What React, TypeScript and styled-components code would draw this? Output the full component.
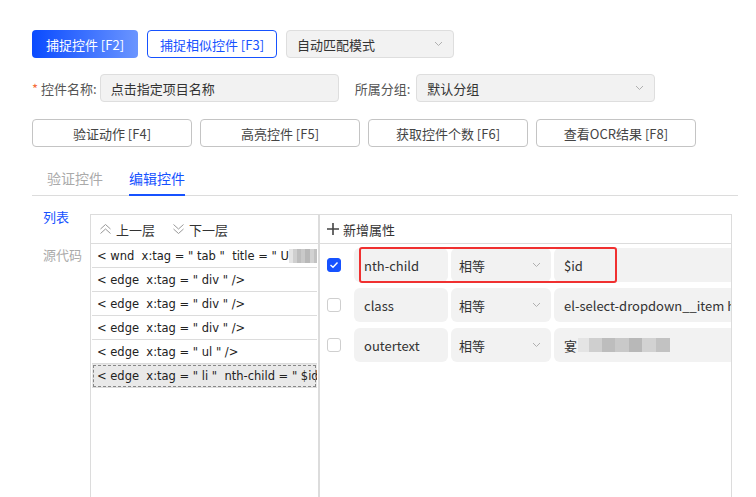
import React from "react";
import styled, { createGlobalStyle } from "styled-components";

const GlobalStyle = createGlobalStyle`
  html, body {
    margin: 0;
    padding: 0;
    background: #fff;
    overflow: hidden;
  }
  body {
    font-family: "Noto Sans CJK SC", "Noto Sans", sans-serif;
    color: #333;
  }
`;

const BLUE = "#1652ff";

const Page = styled.div`
  padding: 30px 0 0 32px;
  width: 724px;
`;

const Toolbar = styled.div`
  display: flex;
  gap: 9px;
  align-items: center;
`;

const PrimaryButton = styled.button`
  height: 28px;
  width: 106px;
  border: none;
  border-radius: 4px;
  background: linear-gradient(90deg, #0a4bff 0%, #6b95ff 100%);
  color: #fff;
  font-family: inherit;
  font-size: 13px;
  padding: 0;
`;

const OutlineButton = styled.button<{ $w?: number }>`
  height: 28px;
  width: ${(p) => p.$w ?? 130}px;
  border: 1px solid ${BLUE};
  border-radius: 4px;
  background: #fff;
  color: ${BLUE};
  font-family: inherit;
  font-size: 13px;
  padding: 0;
`;

const Select = styled.div<{ $w: number }>`
  box-sizing: border-box;
  height: 28px;
  width: ${(p) => p.$w}px;
  display: flex;
  align-items: center;
  justify-content: space-between;
  padding: 0 10px 0 10px;
  background: #f2f2f2;
  border: 1px solid #dedede;
  border-radius: 4px;
  font-size: 13px;
  color: #333;
`;

const FormRow = styled.div`
  display: flex;
  align-items: center;
  margin-top: 16px;
`;

const Label = styled.span<{ $ml?: number; $mr?: number }>`
  font-size: 13px;
  color: #555;
  margin-left: ${(p) => p.$ml ?? 0}px;
  margin-right: ${(p) => p.$mr ?? 9}px;
  white-space: nowrap;
`;

const Star = styled.span`
  color: #f56c3c;
  margin-right: 3px;
`;

const Input = styled.div`
  box-sizing: border-box;
  height: 28px;
  width: 239px;
  display: flex;
  align-items: center;
  padding-left: 10px;
  background: #f2f2f2;
  border: 1px solid #dedede;
  border-radius: 4px;
  font-size: 13px;
  color: #333;
`;

const ActionRow = styled.div`
  display: grid;
  grid-template-columns: repeat(4, 160px);
  gap: 8px;
  margin-top: 17px;
`;

const GhostButton = styled.button`
  height: 28px;
  border: 1px solid #c4c4c4;
  border-radius: 4px;
  background: #fff;
  color: #444;
  font-family: inherit;
  font-size: 13px;
  padding: 0;
`;

const TabBar = styled.div`
  display: flex;
  gap: 26px;
  padding-left: 15px;
  width: 691px;
  border-bottom: 1px solid #dcdcdc;
`;

const Tab = styled.div<{ $active?: boolean }>`
  padding: 22px 0 7px;
  font-size: 14px;
  line-height: 18px;
  color: ${(p) => (p.$active ? BLUE : "#aaa")};
  border-bottom: 2px solid ${(p) => (p.$active ? BLUE : "transparent")};
  margin-bottom: -1px;
`;

const Body = styled.div`
  display: flex;
  margin-top: 10px;
`;

const SideNav = styled.div`
  width: 58px;
  display: flex;
  flex-direction: column;
  gap: 16px;
  padding-left: 11px;
  box-sizing: border-box;
`;

const SideItem = styled.div<{ $active?: boolean }>`
  font-size: 13px;
  line-height: 22px;
  color: ${(p) => (p.$active ? BLUE : "#aaa")};
`;

const Panel = styled.div<{ $w: number }>`
  box-sizing: border-box;
  margin-top: 8px;
  width: ${(p) => p.$w}px;
  height: 300px;
  border: 1px solid #dcdcdc;
  overflow: hidden;
  flex-shrink: 0;
`;

const PanelHeader = styled.div`
  height: 28px;
  display: flex;
  align-items: center;
  border-bottom: 1px solid #dcdcdc;
  font-size: 13px;
  color: #333;
`;

const LayerButton = styled.span<{ $ml: number }>`
  display: inline-flex;
  align-items: center;
  gap: 4px;
  margin-left: ${(p) => p.$ml}px;
`;

const NodeList = styled.div`
  padding: 0 1px;
`;

const NodeRow = styled.div<{ $selected?: boolean }>`
  box-sizing: border-box;
  height: 24px;
  display: flex;
  align-items: center;
  padding-left: 5px;
  white-space: pre;
  overflow: hidden;
  font-family: "DejaVu Sans", Verdana, sans-serif;
  font-size: 11.5px;
  color: #222;
  border-bottom: 1px solid #dcdcdc;
  background: ${(p) => (p.$selected ? "#e9e9e9" : "#fff")};
  outline: ${(p) => (p.$selected ? "1px dashed #888" : "none")};
  outline-offset: -2px;
`;

const Mosaic = styled.span<{ $w: number }>`
  display: inline-block;
  width: ${(p) => p.$w}px;
  height: 14px;
  flex-shrink: 0;
  background: linear-gradient(
    90deg,
    #e4e4e4 0 12%,
    #cfcfcf 12% 26%,
    #bdbdbd 26% 40%,
    #c9c9c9 40% 55%,
    #b8b8b8 55% 70%,
    #d2d2d2 70% 85%,
    #c2c2c2 85% 100%
  );
`;

const Hidden = styled.span`
  display: inline-flex;
  align-items: center;
  gap: 1px;
`;

const AttrHeader = styled(PanelHeader)`
  padding-left: 7px;
  gap: 4px;
`;

const AttrList = styled.div`
  display: flex;
  flex-direction: column;
  gap: 6px;
  padding: 4px 0 0 7px;
`;

const AttrRow = styled.div`
  position: relative;
  display: flex;
  align-items: center;
  height: 34px;
`;

const Check = styled.span<{ $checked?: boolean }>`
  box-sizing: border-box;
  width: 14px;
  height: 14px;
  border-radius: 3px;
  margin-right: 13px;
  flex-shrink: 0;
  display: inline-flex;
  align-items: center;
  justify-content: center;
  background: ${(p) => (p.$checked ? BLUE : "#fff")};
  border: 1px solid ${(p) => (p.$checked ? BLUE : "#cfcfcf")};
`;

const Field = styled.div<{ $w: number; $pl?: number }>`
  box-sizing: border-box;
  height: 34px;
  width: ${(p) => p.$w}px;
  flex-shrink: 0;
  display: flex;
  align-items: center;
  justify-content: space-between;
  padding: 0 10px 0 ${(p) => p.$pl ?? 10}px;
  margin-right: 3px;
  background: #f2f2f2;
  border-radius: 6px;
  font-size: 13px;
  color: #333;
  white-space: nowrap;
  overflow: hidden;
`;

const Highlight = styled.div`
  position: absolute;
  left: 32px;
  top: -1px;
  width: 258px;
  height: 36px;
  box-sizing: border-box;
  border: 2px solid #f03030;
  border-radius: 3px;
  pointer-events: none;
`;

const Chevron = ({ color = "#b0b0b0" }: { color?: string }) => (
  <svg width="9" height="6" viewBox="0 0 9 6">
    <polyline points="1,1 4.5,4.5 8,1" fill="none" stroke={color} strokeWidth="1" />
  </svg>
);

const DoubleChevron = ({ up }: { up?: boolean }) => (
  <svg width="13" height="12" viewBox="0 0 13 12" style={{ transform: up ? "none" : "rotate(180deg)" }}>
    <polyline points="1.5,6 6.5,1.5 11.5,6" fill="none" stroke="#999" strokeWidth="1" />
    <polyline points="1.5,10.5 6.5,6 11.5,10.5" fill="none" stroke="#999" strokeWidth="1" />
  </svg>
);

const Plus = () => (
  <svg width="12" height="12" viewBox="0 0 12 12">
    <path d="M6 0v12M0 6h12" stroke="#444" strokeWidth="1.6" />
  </svg>
);

const Tick = () => (
  <svg width="10" height="8" viewBox="0 0 10 8">
    <polyline points="1.5,4 4,6.3 8.5,1.5" fill="none" stroke="#fff" strokeWidth="1.4" />
  </svg>
);

const nodes = [
  '< edge  x:tag = " div " />',
  '< edge  x:tag = " div " />',
  '< edge  x:tag = " div " />',
  '< edge  x:tag = " ul " />',
];

const attrs = [
  { name: "nth-child", value: "$id", checked: true },
  { name: "class", value: "el-select-dropdown__item hover", checked: false },
  { name: "outertext", value: "", checked: false },
];

const App = () => {
  return (
    <Page>
      <GlobalStyle />
      <Toolbar>
        <PrimaryButton>捕捉控件 [F2]</PrimaryButton>
        <OutlineButton>捕捉相似控件 [F3]</OutlineButton>
        <Select $w={168}>
          自动匹配模式
          <Chevron />
        </Select>
      </Toolbar>

      <FormRow>
        <Label $mr={3}>
          <Star>*</Star>控件名称:
        </Label>
        <Input>点击指定项目名称</Input>
        <Label $ml={16} $mr={6}>
          所属分组:
        </Label>
        <Select $w={239}>
          默认分组
          <Chevron />
        </Select>
      </FormRow>

      <ActionRow>
        <GhostButton>验证动作 [F4]</GhostButton>
        <GhostButton>高亮控件 [F5]</GhostButton>
        <GhostButton>获取控件个数 [F6]</GhostButton>
        <GhostButton>查看OCR结果 [F8]</GhostButton>
      </ActionRow>

      <TabBar>
        <Tab>验证控件</Tab>
        <Tab $active>编辑控件</Tab>
      </TabBar>

      <Body>
        <SideNav>
          <SideItem $active>列表</SideItem>
          <SideItem>源代码</SideItem>
        </SideNav>

        <Panel $w={229}>
          <PanelHeader>
            <LayerButton $ml={8}>
              <DoubleChevron up />
              上一层
            </LayerButton>
            <LayerButton $ml={17}>
              <DoubleChevron />
              下一层
            </LayerButton>
          </PanelHeader>
          <NodeList>
            <NodeRow>
              {'< wnd  x:tag = " tab "  title = " U'}
              <Mosaic $w={30} />
            </NodeRow>
            {nodes.map((n, i) => (
              <NodeRow key={i}>{n}</NodeRow>
            ))}
            <NodeRow $selected>{'< edge  x:tag = " li "  nth-child = " $id " />'}</NodeRow>
          </NodeList>
        </Panel>

        <Panel $w={413}>
          <AttrHeader>
            <Plus />
            新增属性
          </AttrHeader>
          <AttrList>
            {attrs.map((a, i) => (
              <AttrRow key={a.name}>
                <Check $checked={a.checked}>{a.checked && <Tick />}</Check>
                <Field $w={94}>{a.name}</Field>
                <Field $w={100} $pl={8}>
                  相等
                  <Chevron />
                </Field>
                <Field $w={200}>
                  {a.value || (
                    <Hidden>
                      宴<Mosaic $w={92} />
                    </Hidden>
                  )}
                </Field>
                {i === 0 && <Highlight />}
              </AttrRow>
            ))}
          </AttrList>
        </Panel>
      </Body>
    </Page>
  );
};

export default App;
